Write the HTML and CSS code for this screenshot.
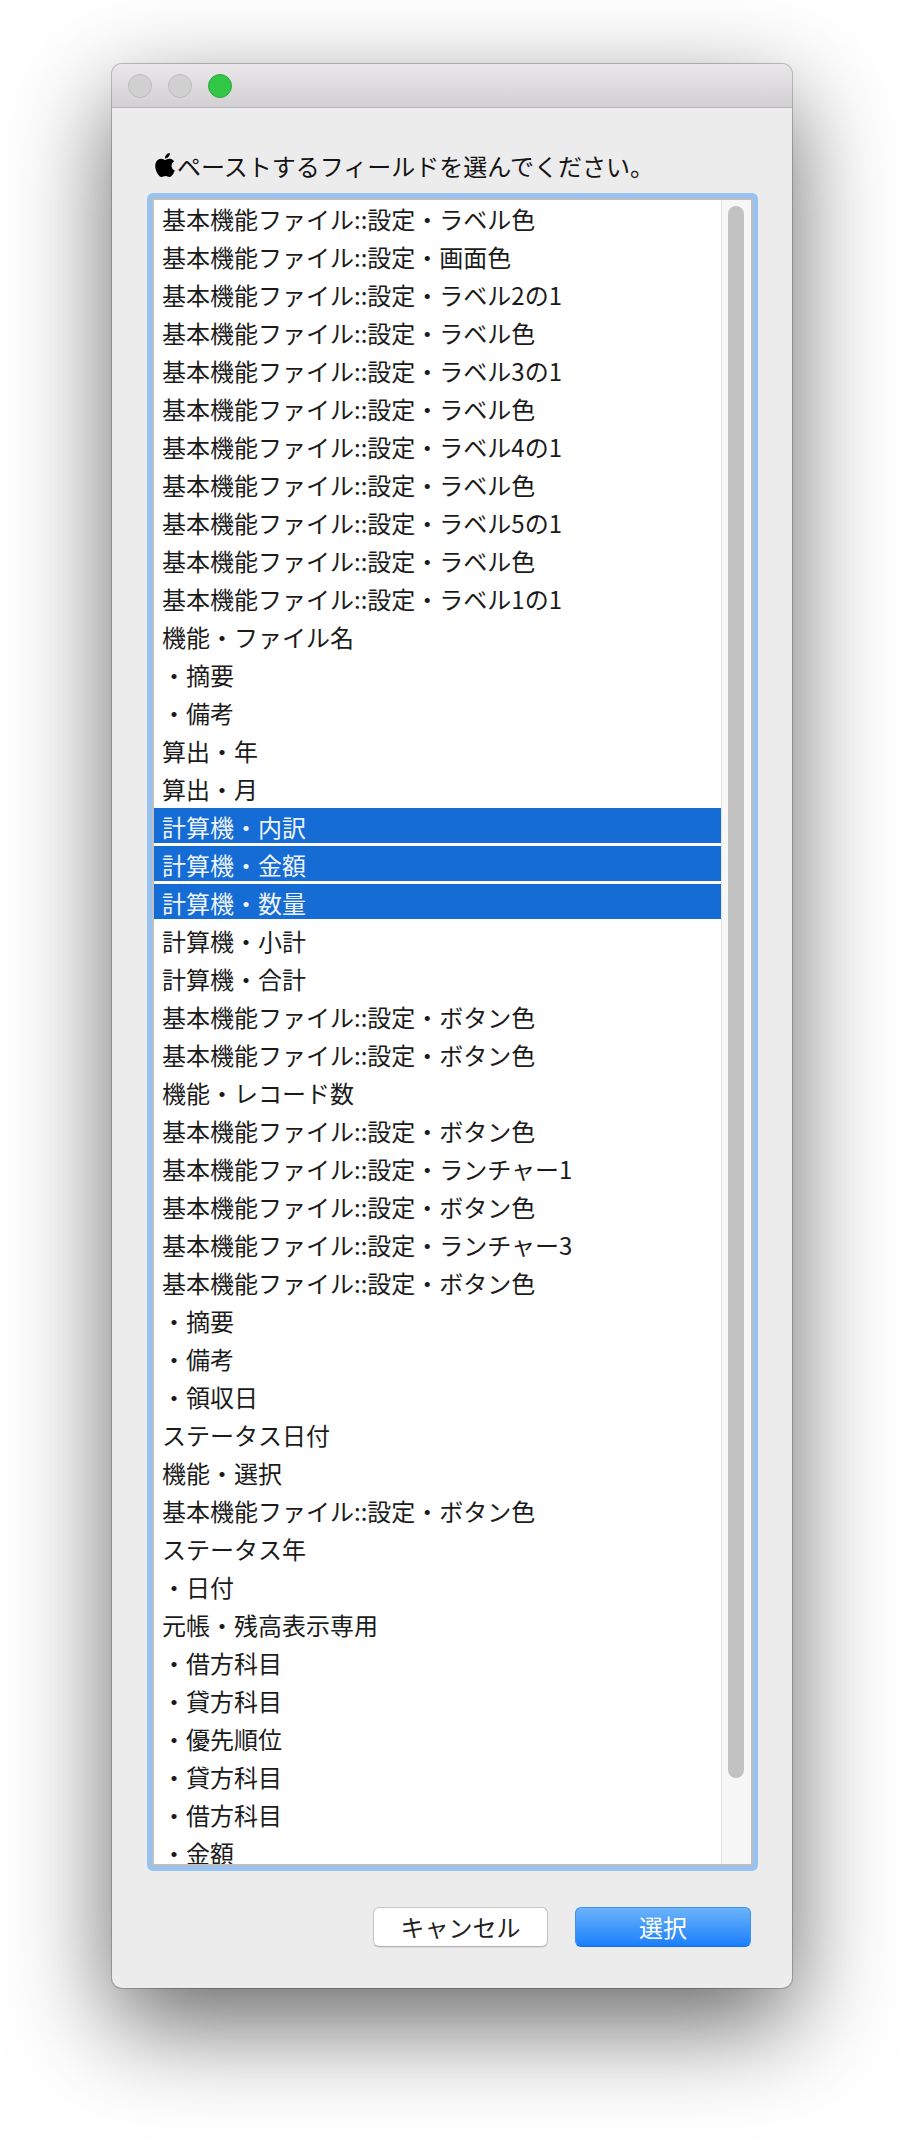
FILE: index.html
```html
<!DOCTYPE html>
<html lang="ja">
<head>
<meta charset="utf-8">
<title>フィールドを選択</title>
<link rel="stylesheet" href="styles.css">
</head>
<body>
<div class="stage">
  <div class="window">
    <div class="titlebar">
      <span class="light light-off"></span>
      <span class="light light-off"></span>
      <span class="light light-zoom"></span>
    </div>
    <div class="body">
      <div class="prompt">
        <svg class="apple" viewBox="3 0 18 24" aria-hidden="true"><path d="M12.152 6.896c-.948 0-2.415-1.078-3.96-1.04-2.04.027-3.91 1.183-4.961 3.014-2.117 3.675-.546 9.103 1.519 12.09 1.013 1.454 2.208 3.09 3.792 3.039 1.52-.065 2.09-.987 3.935-.987 1.831 0 2.35.987 3.96.948 1.637-.026 2.676-1.48 3.676-2.948 1.156-1.688 1.636-3.325 1.662-3.415-.039-.013-3.182-1.221-3.22-4.857-.026-3.04 2.48-4.494 2.597-4.559-1.429-2.09-3.623-2.324-4.39-2.376-2-.156-3.675 1.09-4.61 1.09zM15.53 3.83c.843-1.012 1.4-2.427 1.245-3.83-1.207.052-2.662.805-3.532 1.818-.78.896-1.454 2.338-1.273 3.714 1.338.104 2.715-.688 3.559-1.701"/></svg>
        <span>ペーストするフィールドを選んでください。</span>
      </div>
      <div class="focus-ring">
        <div class="list">
          <ul class="rows">
            <li>基本機能ファイル::設定・ラベル色</li>
            <li>基本機能ファイル::設定・画面色</li>
            <li>基本機能ファイル::設定・ラベル2の1</li>
            <li>基本機能ファイル::設定・ラベル色</li>
            <li>基本機能ファイル::設定・ラベル3の1</li>
            <li>基本機能ファイル::設定・ラベル色</li>
            <li>基本機能ファイル::設定・ラベル4の1</li>
            <li>基本機能ファイル::設定・ラベル色</li>
            <li>基本機能ファイル::設定・ラベル5の1</li>
            <li>基本機能ファイル::設定・ラベル色</li>
            <li>基本機能ファイル::設定・ラベル1の1</li>
            <li>機能・ファイル名</li>
            <li>・摘要</li>
            <li>・備考</li>
            <li>算出・年</li>
            <li>算出・月</li>
            <li class="selected">計算機・内訳</li>
            <li class="selected">計算機・金額</li>
            <li class="selected">計算機・数量</li>
            <li>計算機・小計</li>
            <li>計算機・合計</li>
            <li>基本機能ファイル::設定・ボタン色</li>
            <li>基本機能ファイル::設定・ボタン色</li>
            <li>機能・レコード数</li>
            <li>基本機能ファイル::設定・ボタン色</li>
            <li>基本機能ファイル::設定・ランチャー1</li>
            <li>基本機能ファイル::設定・ボタン色</li>
            <li>基本機能ファイル::設定・ランチャー3</li>
            <li>基本機能ファイル::設定・ボタン色</li>
            <li>・摘要</li>
            <li>・備考</li>
            <li>・領収日</li>
            <li>ステータス日付</li>
            <li>機能・選択</li>
            <li>基本機能ファイル::設定・ボタン色</li>
            <li>ステータス年</li>
            <li>・日付</li>
            <li>元帳・残高表示専用</li>
            <li>・借方科目</li>
            <li>・貸方科目</li>
            <li>・優先順位</li>
            <li>・貸方科目</li>
            <li>・借方科目</li>
            <li>・金額</li>
          </ul>
          <div class="track"><div class="thumb"></div></div>
        </div>
      </div>
      <div class="actions">
        <button class="btn btn-cancel" type="button">キャンセル</button>
        <button class="btn btn-primary" type="button">選択</button>
      </div>
    </div>
  </div>
</div>
</body>
</html>
```

FILE: styles.css
```css
* {
  box-sizing: border-box;
}

html, body {
  margin: 0;
  padding: 0;
  background: #ffffff;
}

body {
  font-family: "Noto Sans CJK JP", "Noto Sans", "Liberation Sans", sans-serif;
  color: #1b1b1b;
}

.stage {
  width: 904px;
  height: 2148px;
  padding: 64px 0 0 112px;
  overflow: hidden;
}

.window {
  width: 680px;
  height: 1924px;
  border-radius: 10px;
  background: #ececec;
  overflow: hidden;
  display: flex;
  flex-direction: column;
  box-shadow: 0 0 0 1px rgba(0, 0, 0, 0.22), 0 36px 100px rgba(0, 0, 0, 0.6);
}

.titlebar {
  height: 44px;
  flex: none;
  display: flex;
  align-items: center;
  gap: 16px;
  padding-left: 16px;
  background: linear-gradient(#e9e7e9, #d2d0d2);
  border-bottom: 1px solid #b9b9b9;
}

.light {
  width: 24px;
  height: 24px;
  border-radius: 50%;
  display: block;
}

.light-off {
  background: #d0d0d0;
  border: 1px solid #bbbbbb;
}

.light-zoom {
  background: #33c748;
  border: 1px solid #2aa83c;
}

.body {
  flex: 1;
  padding: 43px 34px 0 35px;
  display: flex;
  flex-direction: column;
}

.prompt {
  height: 30px;
  display: flex;
  align-items: center;
  padding-left: 8px;
  font-size: 24px;
  line-height: 30px;
  color: #141414;
  margin-bottom: 12px;
  white-space: nowrap;
}

.apple {
  width: 20px;
  height: 24px;
  fill: #000000;
  margin-right: 2px;
  flex: none;
  position: relative;
  top: -1px;
}

.focus-ring {
  height: 1678px;
  border: 5px solid #98c2f0;
  border-radius: 6px;
  background: #98c2f0;
}

.list {
  height: 100%;
  border: 2px solid #bfbfbf;
  background: #ffffff;
  display: flex;
  overflow: hidden;
}

.rows {
  list-style: none;
  margin: 0;
  padding: 0;
  flex: 1;
  overflow: hidden;
}

.rows li {
  height: 38px;
  line-height: 38px;
  padding-left: 8px;
  font-size: 24px;
  white-space: nowrap;
  color: #1b1b1b;
}

.rows li.selected {
  color: #eef3fb;
  background: linear-gradient(#146cd4, #146cd4) top left / 100% 35px no-repeat;
}

.track {
  width: 30px;
  flex: none;
  background: #f7f7f7;
  border-left: 1px solid #e2e2e2;
  padding: 6px 0 0 6px;
}

.thumb {
  width: 16px;
  height: 1572px;
  border-radius: 8px;
  background: #c2c2c2;
}

.actions {
  margin-top: 36px;
  height: 40px;
  display: flex;
  justify-content: flex-end;
  gap: 27px;
  padding-right: 7px;
}

.btn {
  height: 40px;
  border-radius: 6px;
  font-family: "Noto Sans CJK JP", "Noto Sans", sans-serif;
  font-size: 24px;
  line-height: 36px;
  padding: 0;
  margin: 0;
  cursor: default;
}

.btn-cancel {
  width: 175px;
  background: #ffffff;
  color: #222222;
  border: 1px solid #c6c6c6;
  border-bottom-color: #b4b4b4;
  box-shadow: 0 1px 1px rgba(0, 0, 0, 0.08);
}

.btn-primary {
  width: 176px;
  color: #ffffff;
  background: linear-gradient(#6cb3fa, #1b7ffb);
  border: 1px solid #3f92f4;
  border-bottom-color: #1670e6;
}
```
